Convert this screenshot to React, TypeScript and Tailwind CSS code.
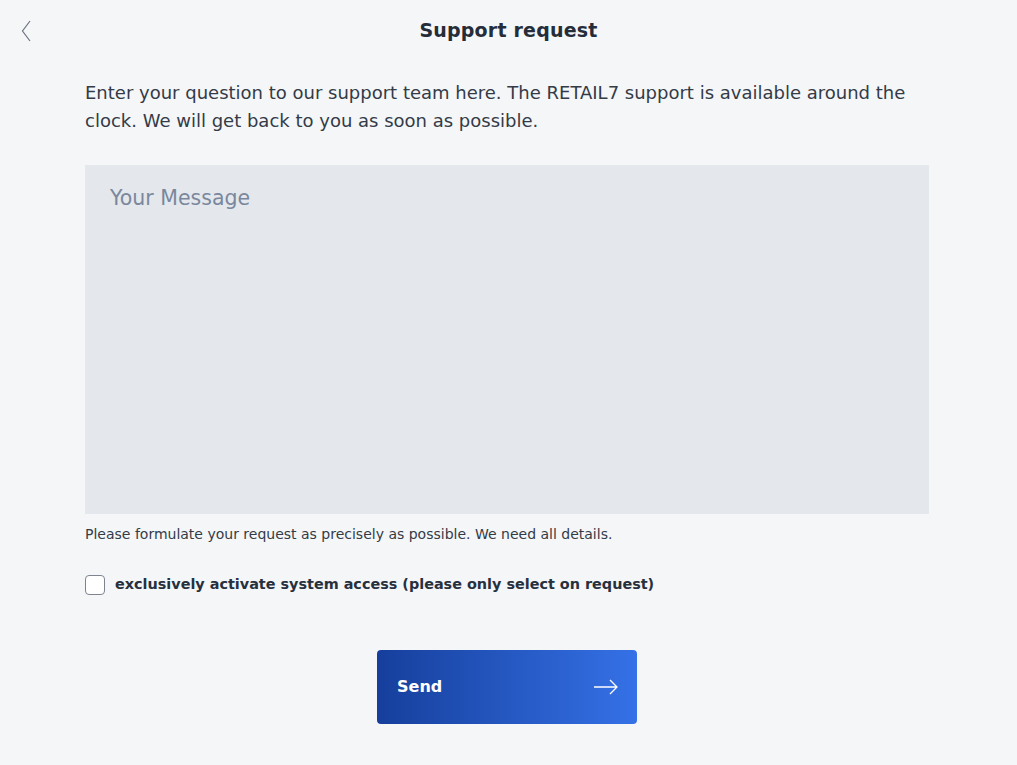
import React, { useState } from 'react';

const font = { fontFamily: '"DejaVu Sans", "Open Sans", sans-serif' };

const App: React.FC = () => {
  const [message, setMessage] = useState('');
  const [access, setAccess] = useState(false);

  return (
    <div className="min-h-screen w-full bg-[#f5f6f8] text-[#27303d]" style={font}>
      {/* Header */}
      <header className="relative flex h-[60px] items-center justify-center">
        <button className="absolute left-[17px] top-[16px] p-1 text-[#6b7280]">
          <svg width="10" height="22" viewBox="0 0 10 22" fill="none">
            <path d="M9 1L1.5 11L9 21" stroke="currentColor" strokeWidth="1.2" />
          </svg>
        </button>
        <h1 className="text-[19px] font-semibold tracking-[0.2px] text-[#252d3a]">Support request</h1>
      </header>

      <main className="ml-[85px] w-[844px] pt-[19px]">
        <p className="text-[18px] leading-[28px] text-[#333b47]">
          Enter your question to our support team here. The RETAIL7 support is available around the clock. We will
          get back to you as soon as possible.
        </p>

        <textarea
          value={message}
          onChange={(e) => setMessage(e.target.value)}
          placeholder="Your Message"
          className="mt-[30px] block h-[349px] w-full resize-none bg-[#e4e7ec] px-[25px] py-[18px] text-[20.5px] text-[#27303d] outline-none placeholder:text-[#7a879c]"
          style={font}
        />

        <p className="mt-[10px] text-[14px] text-[#333b47]">
          Please formulate your request as precisely as possible. We need all details.
        </p>

        <label className="mt-[29px] flex cursor-pointer items-center gap-[10px]">
          <span
            className={
              access
                ? 'flex h-[20px] w-[20px] items-center justify-center rounded-[4px] border border-[#1d4aae] bg-[#1d4aae]'
                : 'flex h-[20px] w-[20px] items-center justify-center rounded-[4px] border border-[#7d848f] bg-white'
            }
          >
            {access && (
              <svg width="12" height="10" viewBox="0 0 12 10" fill="none">
                <path d="M1 5l3.5 3.5L11 1" stroke="white" strokeWidth="1.8" />
              </svg>
            )}
          </span>
          <input type="checkbox" className="hidden" checked={access} onChange={(e) => setAccess(e.target.checked)} />
          <span className="text-[14.4px] font-semibold text-[#27303d]">
            exclusively activate system access (please only select on request)
          </span>
        </label>

        <div className="mt-[54px] flex justify-center">
          <button className="flex h-[74px] w-[260px] items-center justify-between rounded-[4px] bg-gradient-to-r from-[#163f9c] to-[#3571e7] pl-[20px] pr-[18px] text-white">
            <span className="text-[16px] font-semibold">Send</span>
            <svg width="26" height="16" viewBox="0 0 26 16" fill="none">
              <path d="M1 8h23M17 1l7 7-7 7" stroke="white" strokeWidth="1.3" />
            </svg>
          </button>
        </div>
      </main>
    </div>
  );
};

export default App;
